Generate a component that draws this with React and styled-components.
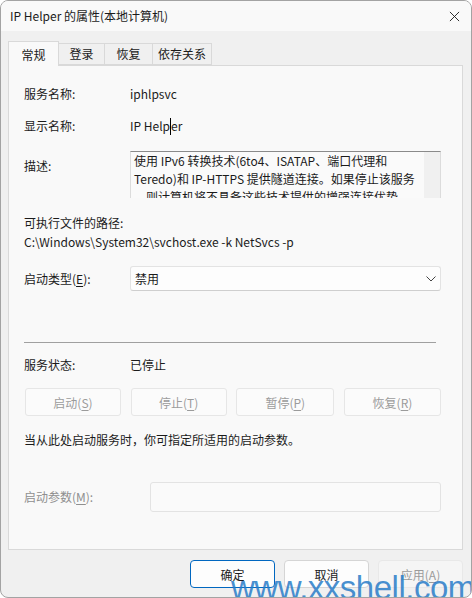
import React from "react";
import styled, { createGlobalStyle } from "styled-components";

const GlobalStyle = createGlobalStyle`
  html, body {
    margin: 0;
    padding: 0;
    background: #ffffff;
  }
  body {
    font-family: "Segoe UI", "Noto Sans CJK SC", "Noto Sans", sans-serif;
    font-size: 12px;
    color: #1b1b1b;
  }
`;

// the service properties dialog
export default function App() {
  return (
    <>
      <GlobalStyle />
      <Window>
        <TitleBar>
          <Title>IP Helper 的属性(本地计算机)</Title>
          <CloseIcon viewBox="0 0 12 12">
            <path d="M1 1 L11 11 M11 1 L1 11" stroke="#1b1b1b" strokeWidth="1" />
          </CloseIcon>
        </TitleBar>
        <Body>
          <Tabs>
            <Tab $active>常规</Tab>
            <Tab style={{ width: 46 }}>登录</Tab>
            <Tab style={{ width: 48 }}>恢复</Tab>
            <Tab style={{ width: 59 }}>依存关系</Tab>
          </Tabs>
          <Panel>
            <Row $top={0}>
              <Label>服务名称:</Label>
              <Value>iphlpsvc</Value>
            </Row>
            <Row $top={12}>
              <Label>显示名称:</Label>
              <Value>
                IP Help
                <Caret />
                er
              </Value>
            </Row>
            <DescRow>
              <Label $pad={5}>描述:</Label>
              <DescBox>
                <DescText>
                  使用 IPv6 转换技术(6to4、ISATAP、端口代理和
                  Teredo)和 IP-HTTPS 提供隧道连接。如果停止该服务
                  ，则计算机将不具备这些技术提供的增强连接优势。
                </DescText>
                <ScrollTrack />
              </DescBox>
            </DescRow>
            <Line $top={15}>可执行文件的路径:</Line>
            <Line $top={-1}>C:\Windows\System32\svchost.exe -k NetSvcs -p</Line>
            <ComboRow>
              <Label>
                启动类型(<u>E</u>):
              </Label>
              <Combo>
                <span>禁用</span>
                <svg width="10" height="6" viewBox="0 0 10 6">
                  <path d="M0.5 0.5 L5 5 L9.5 0.5" fill="none" stroke="#444" strokeWidth="1" />
                </svg>
              </Combo>
            </ComboRow>
            <Separator />
            <Row $top={12}>
              <Label>服务状态:</Label>
              <Value>已停止</Value>
            </Row>
            <ActionRow>
              <ActionButton style={{ width: 96 }}>
                启动(<u>S</u>)
              </ActionButton>
              <ActionButton style={{ width: 96 }}>
                停止(<u>T</u>)
              </ActionButton>
              <ActionButton style={{ width: 98 }}>
                暂停(<u>P</u>)
              </ActionButton>
              <ActionButton style={{ width: 97 }}>
                恢复(<u>R</u>)
              </ActionButton>
            </ActionRow>
            <Line $top={14}>当从此处启动服务时，你可指定所适用的启动参数。</Line>
            <ParamRow>
              <Label $disabled $width={126}>
                启动参数(<u>M</u>):
              </Label>
              <ParamInput />
            </ParamRow>
          </Panel>
          <Footer>
            <DialogButton $primary>确定</DialogButton>
            <DialogButton>取消</DialogButton>
            <DialogButton $disabled>
              应用(<u>A</u>)
            </DialogButton>
          </Footer>
        </Body>
        <Watermark>www.xxshell.com</Watermark>
      </Window>
    </>
  );
}

const Window = styled.div`
  position: relative;
  box-sizing: border-box;
  width: 472px;
  height: 598px;
  border: 1px solid #a3a3a3;
  border-radius: 8px;
  background: #f0f0f0;
  overflow: hidden;
`;

const TitleBar = styled.div`
  height: 30px;
  display: flex;
  align-items: center;
  justify-content: space-between;
  padding: 0 11px 0 9px;
  background: #f9f9f9;
`;

const Title = styled.div`
  font-size: 12px;
  line-height: 16px;
  color: #1b1b1b;
`;

const CloseIcon = styled.svg`
  width: 11px;
  height: 11px;
`;

const Body = styled.div`
  padding: 0 8px 0 7px;
`;

const Tabs = styled.div`
  display: flex;
  align-items: flex-end;
  height: 34px;
  position: relative;
  z-index: 1;
`;

const Tab = styled.div`
  box-sizing: border-box;
  width: ${(p) => (p.$active ? 51 : 46)}px;
  height: ${(p) => (p.$active ? 25 : 22)}px;
  margin-bottom: ${(p) => (p.$active ? -1 : 0)}px;
  padding-top: ${(p) => (p.$active ? 2 : 0)}px;
  display: flex;
  align-items: center;
  justify-content: center;
  background: ${(p) => (p.$active ? "#f9f9f9" : "#f0f0f0")};
  border: 1px solid #d9d9d9;
  border-bottom: ${(p) => (p.$active ? "none" : "1px solid #d9d9d9")};
  border-left-width: ${(p) => (p.$active ? 1 : 0)}px;
  font-size: 12px;
  line-height: 16px;
  color: #1b1b1b;
`;

const Panel = styled.div`
  box-sizing: border-box;
  height: 485px;
  background: #f9f9f9;
  border: 1px solid #d9d9d9;
  padding: 18px 21px 0 15px;
  display: flex;
  flex-direction: column;
`;

const Row = styled.div`
  display: flex;
  align-items: center;
  height: 20px;
  margin-top: ${(p) => p.$top}px;
`;

const Label = styled.div`
  flex: 0 0 ${(p) => p.$width || 106}px;
  align-self: ${(p) => (p.$pad ? "flex-start" : "center")};
  padding-top: ${(p) => p.$pad || 0}px;
  line-height: 20px;
  color: ${(p) => (p.$disabled ? "#8f8f8f" : "#1b1b1b")};
  & u {
    text-underline-offset: 2px;
  }
`;

const Value = styled.div`
  line-height: 20px;
  display: flex;
  align-items: center;
  white-space: pre;
`;

const Caret = styled.span`
  display: inline-block;
  width: 1px;
  height: 17px;
  background: #000;
`;

const DescRow = styled.div`
  display: flex;
  margin-top: 15px;
`;

const DescBox = styled.div`
  box-sizing: border-box;
  flex: 1;
  height: 47px;
  display: flex;
  border: 1px solid #dcdcdc;
  border-top-color: #8a8a8a;
  border-bottom: none;
  background: #fafafa;
  overflow: hidden;
`;

const DescText = styled.div`
  flex: 1;
  padding: 0 4px 0 3px;
  line-height: 18px;
  font-size: 12px;
  color: #1b1b1b;
`;

const ScrollTrack = styled.div`
  flex: 0 0 16px;
  background: #f0f0f0;
`;

const Line = styled.div`
  line-height: 20px;
  margin-top: ${(p) => p.$top}px;
`;

const ComboRow = styled.div`
  display: flex;
  align-items: center;
  margin-top: 14px;
`;

const Combo = styled.div`
  box-sizing: border-box;
  flex: 1;
  height: 25px;
  display: flex;
  align-items: center;
  justify-content: space-between;
  padding: 0 4px 0 4px;
  background: #fdfdfd;
  border: 1px solid #e3e3e3;
  border-bottom-color: #cfcfcf;
  border-radius: 3px;
`;

const Separator = styled.div`
  height: 1px;
  margin: 51px 5px 0 0;
  background: #a0a0a0;
`;

const ActionRow = styled.div`
  display: flex;
  justify-content: space-between;
  margin-top: 13px;
  padding-left: 1px;
`;

const ActionButton = styled.div`
  box-sizing: border-box;
  height: 28px;
  display: flex;
  align-items: center;
  justify-content: center;
  border: 1px solid #e6e6e6;
  border-radius: 3px;
  background: #fbfbfb;
  color: #9b9b9b;
  & u {
    text-underline-offset: 2px;
  }
`;

const ParamRow = styled.div`
  display: flex;
  align-items: center;
  margin-top: 32px;
`;

const ParamInput = styled.div`
  box-sizing: border-box;
  flex: 1;
  height: 30px;
  border: 1px solid #e3e3e3;
  border-radius: 3px;
  background: #fafafa;
`;

const Footer = styled.div`
  display: flex;
  justify-content: flex-end;
  gap: 9px;
  padding-top: 10px;
`;

const DialogButton = styled.div`
  box-sizing: border-box;
  width: 85px;
  height: 28px;
  display: flex;
  align-items: center;
  justify-content: center;
  border-radius: 4px;
  background: ${(p) => (p.$disabled ? "#f5f5f5" : "#fdfdfd")};
  border: 1px solid ${(p) => (p.$primary ? "#0067c0" : p.$disabled ? "#e8e8e8" : "#d5d5d5")};
  color: ${(p) => (p.$disabled ? "#9b9b9b" : "#1b1b1b")};
  & u {
    text-underline-offset: 2px;
  }
`;

const Watermark = styled.div`
  position: absolute;
  left: 230px;
  bottom: -9px;
  font-family: "Liberation Sans", Arial, sans-serif;
  font-size: 33px;
  line-height: 36px;
  letter-spacing: -0.5px;
  color: rgba(40, 124, 200, 0.85);
  white-space: nowrap;
  pointer-events: none;
`;
